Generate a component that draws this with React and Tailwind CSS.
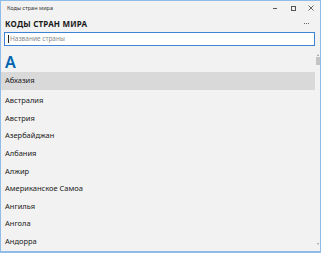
import React from "react";

const countries = [
  "Абхазия",
  "Австралия",
  "Австрия",
  "Азербайджан",
  "Албания",
  "Алжир",
  "Американское Самоа",
  "Ангилья",
  "Ангола",
  "Андорра",
];

const App = () => {
  return (
    <div className="w-[321px] h-[253px] flex flex-col overflow-hidden border border-[#8fbde8] border-b-2 bg-[#f2f2f2] text-[#1a1a1a] font-['Noto_Sans',sans-serif]">
      {/* ===== TITLE BAR ===== */}
      <div className="h-[14px] flex items-center justify-between pl-[6px]">
        <span className="text-[5.5px] text-[#333]">Коды стран мира</span>
        <div className="flex items-center h-full">
          <div className="w-[18px] h-full flex items-center justify-center">
            <div className="w-[4px] h-px bg-[#555]" />
          </div>
          <div className="w-[18px] h-full flex items-center justify-center">
            <div className="w-[5px] h-[5px] border border-[#555]" />
          </div>
          <div className="w-[18px] h-full flex items-center justify-center">
            <svg width="6" height="6" viewBox="0 0 6 6">
              <path d="M0.5 0.5 L5.5 5.5 M5.5 0.5 L0.5 5.5" stroke="#555" strokeWidth="0.9" />
            </svg>
          </div>
        </div>
      </div>

      {/* ===== HEADER ===== */}
      <div className="h-[17px] flex items-center justify-between pl-[4px] pr-[11px]">
        <h1 className="text-[8px] font-bold tracking-[0.2px]">КОДЫ СТРАН МИРА</h1>
        <div className="flex gap-[1px]">
          <div className="w-px h-px bg-[#666]" />
          <div className="w-px h-px bg-[#666]" />
          <div className="w-px h-px bg-[#666]" />
        </div>
      </div>

      {/* ===== SEARCH ===== */}
      <div className="pl-[3px] pr-[5px]">
        <div className="h-[14px] bg-white border border-[#3d84d4] flex items-center pl-[3px]">
          <div className="w-px h-[8px] bg-[#222] mr-[1px]" />
          <span className="text-[6.5px] text-[#8a8a8a]">Название страны</span>
        </div>
      </div>

      {/* ===== LIST ===== */}
      <div className="flex-1 flex min-h-0 mt-[4px]">
        <div className="flex-1 flex flex-col overflow-hidden">
          <div className="h-[22px] flex items-end pl-[4px] pb-[2px]">
            <span className="text-[16px] leading-none font-semibold text-[#0063b1]">А</span>
          </div>
          <div className="h-[18px] bg-[#d9d9d9] flex items-center pl-[4px] text-[7.5px]">
            {countries[0]}
          </div>
          <div className="mt-[2px] flex flex-col">
            {countries.slice(1).map((c) => (
              <div key={c} className="h-[17.6px] flex items-center pl-[4px] text-[7.5px]">
                {c}
              </div>
            ))}
          </div>
        </div>

        {/* scrollbar */}
        <div className="w-[5px] flex flex-col items-center pt-[4px] pb-[6px] justify-between">
          <div className="flex flex-col items-center">
            <div className="w-0 h-0 border-l-[1.5px] border-r-[1.5px] border-b-[2px] border-l-transparent border-r-transparent border-b-[#999]" />
            <div className="w-[4px] h-[8px] bg-[#c4c4c4] mt-[1px]" />
          </div>
          <div className="w-0 h-0 border-l-[1.5px] border-r-[1.5px] border-t-[2px] border-l-transparent border-r-transparent border-t-[#999]" />
        </div>
      </div>
    </div>
  );
};

export default App;
